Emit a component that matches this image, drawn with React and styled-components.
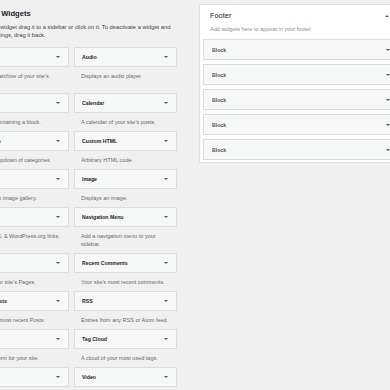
import styled, { createGlobalStyle } from "styled-components";

const widgets = [
  { name: "Archives", desc: "A monthly archive of your site’s Posts." },
  { name: "Audio", desc: "Displays an audio player." },
  { name: "Block", desc: "A widget containing a block." },
  { name: "Calendar", desc: "A calendar of your site’s posts." },
  { name: "Categories", desc: "A list or dropdown of categories." },
  { name: "Custom HTML", desc: "Arbitrary HTML code." },
  { name: "Gallery", desc: "Displays an image gallery." },
  { name: "Image", desc: "Displays an image." },
  { name: "Meta", desc: "Login, RSS, & WordPress.org links." },
  { name: "Navigation Menu", desc: "Add a navigation menu to your sidebar." },
  { name: "Pages", desc: "A list of your site’s Pages." },
  { name: "Recent Comments", desc: "Your site’s most recent comments." },
  { name: "Recent Posts", desc: "Your site’s most recent Posts." },
  { name: "RSS", desc: "Entries from any RSS or Atom feed." },
  { name: "Search", desc: "A search form for your site." },
  { name: "Tag Cloud", desc: "A cloud of your most used tags." },
  { name: "Text", desc: "Arbitrary text." },
  { name: "Video", desc: "Displays a video from the media library." },
];

const footerBlocks = ["Block", "Block", "Block", "Block", "Block"];

const App = () => {
  return (
    <>
      <GlobalStyle />
      <Page>
        <Available>
          <Title>Available Widgets</Title>
          <Intro>
            To activate a widget drag it to a sidebar or click on it. To
            deactivate a widget and delete its settings, drag it back.
          </Intro>
          <WidgetGrid>
            {widgets.map((w) => (
              <WidgetCell key={w.name}>
                <WidgetTop>
                  <WidgetName>{w.name}</WidgetName>
                  <Arrow />
                </WidgetTop>
                <WidgetDesc>{w.desc}</WidgetDesc>
              </WidgetCell>
            ))}
          </WidgetGrid>
        </Available>

        <Sidebar>
          <SidebarHeader>
            <SidebarName>Footer</SidebarName>
            <Arrow $up />
          </SidebarHeader>
          <SidebarDesc>Add widgets here to appear in your footer.</SidebarDesc>
          <BlockList>
            {footerBlocks.map((b, i) => (
              <BlockItem key={i}>
                <BlockName>{b}</BlockName>
                <Arrow />
              </BlockItem>
            ))}
          </BlockList>
        </Sidebar>
      </Page>
    </>
  );
};

const GlobalStyle = createGlobalStyle`
  html, body {
    margin: 0;
    background: #f0f0f1;
    overflow: hidden;
  }
  body {
    font-family: "Liberation Sans", Arial, sans-serif;
    color: #3c434a;
  }
`;

const Page = styled.div`
  display: flex;
  align-items: flex-start;
  gap: 22px;
  margin-left: -34px;
  padding-top: 4px;
  height: 390px;
  box-sizing: border-box;
`;

const Available = styled.div`
  width: 211px;
  flex-shrink: 0;
  padding-top: 5px;
`;

const Title = styled.h2`
  margin: 0;
  font-size: 7.6px;
  line-height: 9px;
  font-weight: 700;
  color: #1d2327;
  white-space: nowrap;
`;

const Intro = styled.p`
  margin: 5px 0 8px;
  font-size: 5.8px;
  line-height: 8px;
  color: #3c434a;
`;

const WidgetGrid = styled.div`
  display: grid;
  grid-template-columns: 103px 103px;
  column-gap: 5px;
`;

const WidgetCell = styled.div`
  display: flex;
  flex-direction: column;
`;

const WidgetTop = styled.div`
  height: 20px;
  box-sizing: border-box;
  display: flex;
  align-items: center;
  justify-content: space-between;
  padding: 0 8px 0 7px;
  background: #f6f7f7;
  border: 1px solid #dcdcde;
`;

const WidgetName = styled.span`
  font-size: 5.2px;
  font-weight: 700;
  color: #1d2327;
  white-space: nowrap;
`;

const WidgetDesc = styled.p`
  margin: 5px 0;
  padding: 0 5px 0 7px;
  font-size: 5.5px;
  line-height: 8px;
  color: #646970;
`;

const Arrow = styled.span`
  width: 0;
  height: 0;
  border-left: 2px solid transparent;
  border-right: 2px solid transparent;
  ${(p) =>
    p.$up
      ? "border-bottom: 2.5px solid #50575e;"
      : "border-top: 2.5px solid #50575e;"}
`;

const Sidebar = styled.div`
  width: 204px;
  flex-shrink: 0;
  box-sizing: border-box;
  background: #fff;
  border: 1px solid #e0e0e0;
  padding: 6px 3px 2px;
`;

const SidebarHeader = styled.div`
  display: flex;
  align-items: center;
  justify-content: space-between;
  padding: 0 10px 0 7px;
`;

const SidebarName = styled.h3`
  margin: 0;
  font-size: 7.4px;
  line-height: 9px;
  font-weight: 400;
  color: #1d2327;
`;

const SidebarDesc = styled.p`
  margin: 5px 0 6px;
  padding-left: 7px;
  font-size: 5.5px;
  line-height: 8px;
  color: #8c8f94;
`;

const BlockList = styled.div`
  display: flex;
  flex-direction: column;
  gap: 4px;
`;

const BlockItem = styled.div`
  height: 21px;
  box-sizing: border-box;
  display: flex;
  align-items: center;
  justify-content: space-between;
  padding: 0 8px;
  background: #f6f7f7;
  border: 1px solid #dcdcde;
`;

const BlockName = styled.span`
  font-size: 5.2px;
  font-weight: 700;
  color: #50575e;
`;

export default App;
